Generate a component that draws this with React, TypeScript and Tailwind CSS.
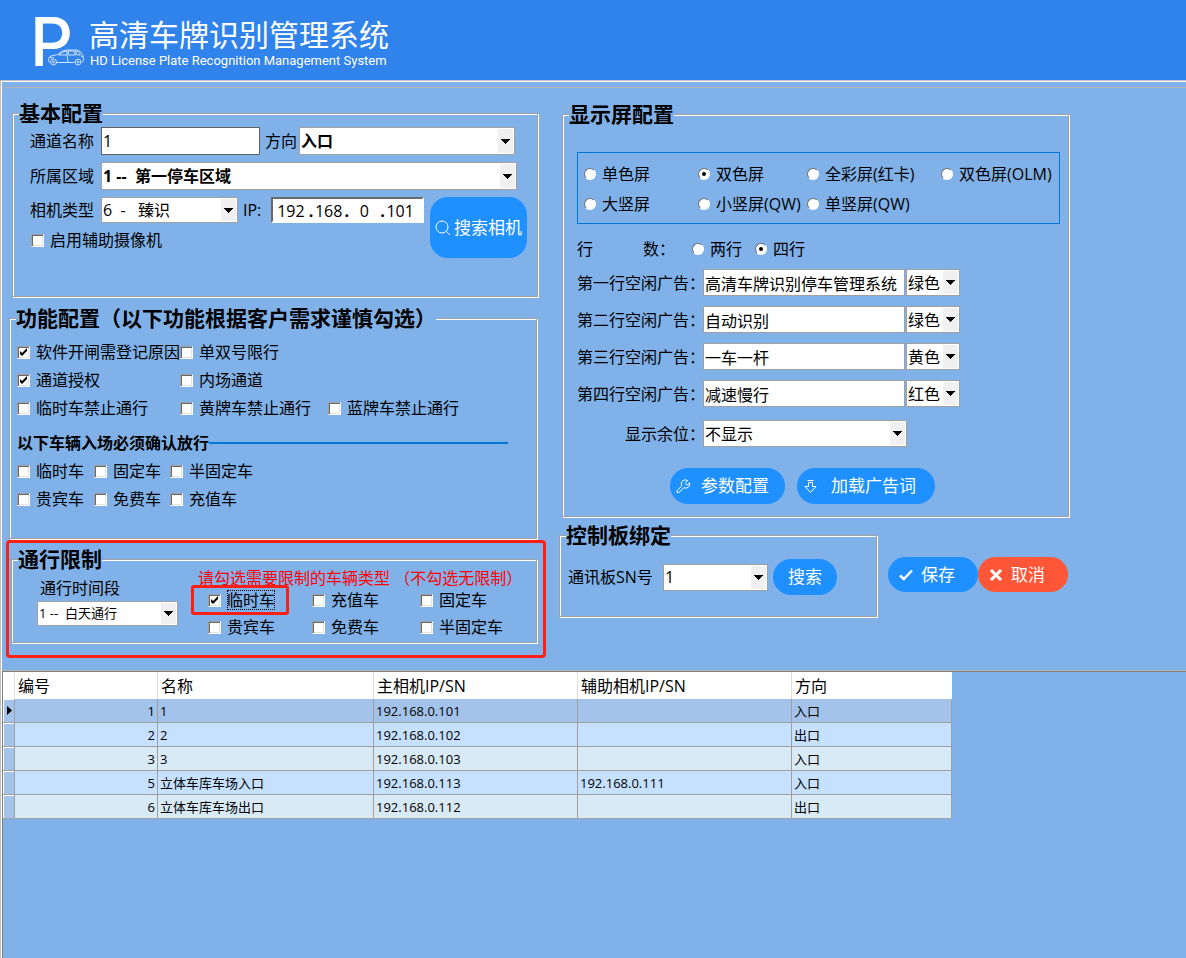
import type { ReactNode } from 'react';
import clsx from 'clsx';

const vehicleChecks = ['临时车', '固定车', '半固定车', '贵宾车', '免费车', '充值车'];

const featureChecks = [
  { label: '软件开闸需登记原因', checked: true },
  { label: '单双号限行' },
  { label: '' },
  { label: '通道授权', checked: true },
  { label: '内场通道' },
  { label: '' },
  { label: '临时车禁止通行' },
  { label: '黄牌车禁止通行' },
  { label: '蓝牌车禁止通行' },
];

const screenTypes = ['单色屏', '双色屏', '全彩屏(红卡)', '双色屏(OLM)', '大竖屏', '小竖屏(QW)', '单竖屏(QW)'];

const adLines = [
  { id: 'ad1', label: '第一行空闲广告：', text: '高清车牌识别停车管理系统', color: '绿色' },
  { id: 'ad2', label: '第二行空闲广告：', text: '自动识别', color: '绿色' },
  { id: 'ad3', label: '第三行空闲广告：', text: '一车一杆', color: '黄色' },
  { id: 'ad4', label: '第四行空闲广告：', text: '减速慢行', color: '红色' },
];

const channels = [
  { no: 1, name: '1', ip: '192.168.0.101', aux: '', dir: '入口' },
  { no: 2, name: '2', ip: '192.168.0.102', aux: '', dir: '出口' },
  { no: 3, name: '3', ip: '192.168.0.103', aux: '', dir: '入口' },
  { no: 5, name: '立体车库车场入口', ip: '192.168.0.113', aux: '192.168.0.111', dir: '入口' },
  { no: 6, name: '立体车库车场出口', ip: '192.168.0.112', aux: '', dir: '出口' },
];

type GroupProps = { title: string; className?: string; bodyClass?: string; children: ReactNode };

function Group({ title, className, bodyClass, children }: GroupProps) {
  return (
    <fieldset className={clsx('border border-[#a0a0a0] shadow-[1px_1px_0_#fff,inset_1px_1px_0_#fff]', className)}>
      <legend className="ml-[6px] bg-[#80b1e8] text-[21px] leading-6 font-bold whitespace-nowrap">{title}</legend>
      <div className={bodyClass}>{children}</div>
    </fieldset>
  );
}

function Check({ label, checked, focused }: { label: string; checked?: boolean; focused?: boolean }) {
  return (
    <label className="flex items-center gap-[6px] whitespace-nowrap">
      <span className="grid shrink-0">
        <input
          type="checkbox"
          defaultChecked={checked}
          className="peer col-start-1 row-start-1 size-[13px] appearance-none border border-t-[#a0a0a0] border-r-white border-b-white border-l-[#a0a0a0] bg-white shadow-[inset_1px_1px_0_#696969,inset_-1px_-1px_0_#e3e3e3]"
        />
        <svg viewBox="0 0 13 13" className="pointer-events-none col-start-1 row-start-1 hidden size-[13px] peer-checked:block">
          <path d="M3 5v3l2 2 5-5V2L5 7z" fill="#000" />
        </svg>
      </span>
      <span className={clsx('leading-5', focused && 'outline-1 -outline-offset-1 outline-dotted outline-black')}>{label}</span>
    </label>
  );
}

function Radio({ name, label, checked }: { name: string; label: string; checked?: boolean }) {
  return (
    <label className="flex items-center gap-[6px] whitespace-nowrap">
      <input
        type="radio"
        name={name}
        defaultChecked={checked}
        className="grid size-3 shrink-0 appearance-none place-items-center rounded-full border border-t-[#707070] border-r-white border-b-white border-l-[#707070] bg-white before:hidden before:size-1 before:rounded-full before:bg-black before:content-[''] checked:before:block"
      />
      {label}
    </label>
  );
}

function Select({ id, label, value, className }: { id?: string; label?: string; value: string; className?: string }) {
  return (
    <span className={clsx('relative flex shrink-0 border border-[#a0a0a0] bg-white', className)}>
      <select id={id} aria-label={label} className="h-full w-full appearance-none pl-px outline-none">
        <option>{value}</option>
      </select>
      <span className="pointer-events-none absolute inset-y-px right-px flex w-[15px] items-center justify-center bg-[#f0f0f0]">
        <svg viewBox="0 0 9 5" className="h-[5px] w-[9px]" shapeRendering="crispEdges">
          <path d="M0 0h9L4.5 5z" />
        </svg>
      </span>
    </span>
  );
}

function Logo() {
  return (
    <div className="relative mt-[3px] ml-[30px] h-[50px] w-[59px] text-white">
      <span className="block font-['Inter'] text-[67px] leading-[50px] font-medium">P</span>
      <svg viewBox="0 0 38 17" className="absolute right-[4px] bottom-px h-[17px] w-[38px]" fill="none" stroke="#cfe2fb" strokeWidth="1">
        <path d="M2.500 13.500 1.500 11.500 2 8.500 4 7 10.500 5.500 15.500 2 20 1h10l3.500 1.500 2.500 4 .5 5-1.500 2M9.500 13.500h17.500" />
        <path d="M11.500 6 16 3l4-1v4zM21.500 2h5l2 4h-7zM28 2l3 .5 2.500 3.500H30zM3 8.500l4 .5M20 6l1 7M34 7l2 1" />
        <circle cx="6.500" cy="13" r="3" />
        <circle cx="6.500" cy="13" r="1" />
        <circle cx="31" cy="13" r="3" />
        <circle cx="31" cy="13" r="1" />
      </svg>
    </div>
  );
}

function BasicConfig() {
  return (
    <Group title="基本配置" className="mr-[21px] ml-[10px]" bodyClass="pt-[2px] pr-[10px] pb-[38px] pl-[17px]">
      <div className="flex items-center">
        <label htmlFor="channel" className="w-[71px] shrink-0">通道名称</label>
        <input id="channel" defaultValue="1" className="h-7 w-[159px] min-w-0 border border-[#606060] bg-white pl-px outline-none" />
        <label htmlFor="direction" className="w-[39px] shrink-0 pl-[5px] whitespace-nowrap">方向</label>
        <Select id="direction" value="入口" className="h-7 w-[216px] font-bold" />
      </div>
      <div className="mt-[7px] flex items-center">
        <label htmlFor="area" className="w-[71px] shrink-0">所属区域</label>
        <Select id="area" value={'1 -- \u00a0第一停车区域'} className="h-7 w-[416px] font-bold" />
      </div>
      <div className="mt-[7px] flex items-start">
        <div>
          <div className="flex items-center">
            <label htmlFor="camera" className="w-[71px] shrink-0">相机类型</label>
            <Select id="camera" value={'6 \u00a0-\u00a0\u00a0 臻识'} className="h-[26px] w-[137px]" />
            <span className="w-[33px] pl-[5px]">IP:</span>
            <div className="flex h-[26px] w-[153px] items-end border-2 border-t-[#696969] border-r-white border-b-white border-l-[#696969] bg-white pr-[6px]">
              {['192', '168', '0', '101'].map((part, i) => (
                <span key={part} className="flex flex-1 items-end leading-5">
                  {i > 0 && <span className="w-1 font-bold">.</span>}
                  <input aria-label={`IP ${i + 1}`} defaultValue={part} className="h-5 w-full min-w-0 text-center outline-none" />
                </span>
              ))}
            </div>
          </div>
          <div className="mt-[7px] flex pl-px">
            <Check label="启用辅助摄像机" />
          </div>
        </div>
        <button type="button" className="ml-[6px] flex h-[61px] w-[97px] items-center justify-center gap-[3px] rounded-[18px] bg-[#1e90ff] text-[17px] whitespace-nowrap text-white">
          <svg viewBox="0 0 16 16" className="size-4 shrink-0" fill="none" stroke="currentColor">
            <circle cx="7" cy="7" r="6" />
            <path d="m11.500 11.500 3.500 3.500" />
          </svg>
          搜索相机
        </button>
      </div>
    </Group>
  );
}

function FeatureConfig() {
  return (
    <Group title="功能配置（以下功能根据客户需求谨慎勾选）" className="mt-[9px] mr-[22px] ml-[7px]" bodyClass="pt-2 pb-[25px] pl-[7px]">
      <div className="grid auto-rows-[28px] grid-cols-[163px_148px_1fr]">
        {featureChecks.map((item, i) => (item.label ? <Check key={i} {...item} /> : <span key={i} />))}
      </div>
      <div className="mt-[7px] flex h-7 items-center pr-7">
        <h3 className="font-bold whitespace-nowrap">以下车辆入场必须确认放行</h3>
        <span className="h-[2px] flex-1 bg-[#0078d7]" />
      </div>
      <div className="grid auto-rows-[28px] grid-cols-[77px_76px_1fr]">
        {vehicleChecks.map((label) => (
          <Check key={label} label={label} />
        ))}
      </div>
    </Group>
  );
}

function PassLimit() {
  return (
    <div className="mt-px mr-[13px] ml-1 rounded border-[3px] border-[#ff2015] pt-1 pr-[6px] pb-3 pl-[2px]">
      <Group title="通行限制" bodyClass="flex pt-px pb-[3px] pl-[25px]">
        <div className="flex flex-col gap-px pt-1">
          <label htmlFor="period" className="pl-[3px] leading-6">通行时间段</label>
          <Select id="period" value={'1 -- \u00a0白天通行'} className="h-[25px] w-[141px] text-[13px]" />
        </div>
        <div className="ml-[13px] flex-1">
          <p className="pb-px pl-[7px] leading-3 whitespace-nowrap text-[#ff0000]">请勾选需要限制的车辆类型 （不勾选无限制）</p>
          <div className="grid grid-cols-[121px_108px_1fr] items-center">
            <div className="mr-[23px] flex h-[30px] rounded-[3px] border-[3px] border-[#ff2015] pl-[14px]">
              <Check label="临时车" checked focused />
            </div>
            <Check label="充值车" />
            <Check label="固定车" />
          </div>
          <div className="grid h-6 grid-cols-[121px_108px_1fr] items-center">
            <div className="pl-[17px]">
              <Check label="贵宾车" />
            </div>
            <Check label="免费车" />
            <Check label="半固定车" />
          </div>
        </div>
      </Group>
    </div>
  );
}

function ScreenConfig() {
  return (
    <Group title="显示屏配置" className="mr-[117px] ml-[3px]" bodyClass="pt-[26px] pr-2 pb-3 pl-[14px]">
      <div className="grid auto-rows-[30px] grid-cols-[114px_109px_134px_1fr] border border-[#0078d7] pt-[6px] pb-1 pl-[6px]">
        {screenTypes.map((type) => (
          <Radio key={type} name="screen" label={type} checked={type === '双色屏'} />
        ))}
      </div>
      <div className="mt-[13px] flex h-6 items-center">
        <span className="w-[66px]">行</span>
        <span className="w-[49px]">数：</span>
        <div className="flex gap-[13px]">
          <Radio name="rows" label="两行" />
          <Radio name="rows" label="四行" checked />
        </div>
      </div>
      <div className="mt-2 flex flex-col gap-[10px]">
        {adLines.map((ad) => (
          <div key={ad.id} className="flex items-center">
            <label htmlFor={ad.id} className="w-[126px] shrink-0 whitespace-nowrap">{ad.label}</label>
            <input id={ad.id} defaultValue={ad.text} className="h-[27px] w-[202px] border border-[#a0a0a0] bg-white pl-px outline-none" />
            <Select label={`${ad.label}颜色`} value={ad.color} className="ml-px h-[27px] w-[54px]" />
          </div>
        ))}
      </div>
      <div className="mt-[13px] flex items-center">
        <label htmlFor="remain" className="w-[126px] shrink-0 pl-12 whitespace-nowrap">显示余位：</label>
        <Select id="remain" value="不显示" className="h-[27px] w-[204px]" />
      </div>
      <div className="mt-[21px] ml-[93px] flex gap-3 text-[17px] text-white">
        <button type="button" className="flex h-9 w-[115px] items-center gap-[10px] rounded-full bg-[#1e90ff] pl-[6px] whitespace-nowrap">
          <svg viewBox="0 0 15 15" className="size-[15px] shrink-0" fill="none" stroke="currentColor">
            <path d="M11.500 1.500A4 4 0 0 0 5.800 6.800L1 11.800v1.700h2l5-4.800a4 4 0 0 0 5.500-5L11.500 6l-2-.5" />
            <path d="M11.500 1.500 9 4.500" />
          </svg>
          参数配置
        </button>
        <button type="button" className="flex h-9 w-[138px] items-center gap-[13px] rounded-full bg-[#1e90ff] pl-[6px] whitespace-nowrap">
          <svg viewBox="0 0 15 15" className="size-[15px] shrink-0" fill="none" stroke="currentColor">
            <path d="M4.500 1.500h6M5.500 7.500v-4h4v4H13L7.500 13.500 2 7.500z" />
          </svg>
          加载广告词
        </button>
      </div>
    </Group>
  );
}

function BoardBinding() {
  return (
    <div className="mt-[6px] flex items-start">
      <Group title="控制板绑定" className="w-[318px] shrink-0" bodyClass="flex items-center pt-3 pb-[21px] pl-2">
        <label htmlFor="board" className="w-[95px] whitespace-nowrap">通讯板SN号</label>
        <Select id="board" value="1" className="h-[27px] w-[105px]" />
        <button type="button" className="ml-[5px] h-9 w-16 rounded-full bg-[#1e90ff] text-[17px] text-white">搜索</button>
      </Group>
      <div className="mt-[34px] ml-[11px] flex text-[17px] text-white">
        <button type="button" className="flex h-[35px] w-[90px] items-center gap-2 rounded-full bg-[#1e90ff] pl-[11px] whitespace-nowrap">
          <svg viewBox="0 0 14 14" className="size-[14px] shrink-0" fill="none" stroke="currentColor" strokeWidth="2.400">
            <path d="M1 7.500 4.800 11 13 2.500" />
          </svg>
          保存
        </button>
        <button type="button" className="flex h-[35px] w-[90px] items-center gap-2 rounded-full bg-[#ff5638] pl-[11px] whitespace-nowrap">
          <svg viewBox="0 0 14 14" className="size-[14px] shrink-0" fill="none" stroke="currentColor" strokeWidth="3">
            <path d="m2 2 10 10M12 2 2 12" />
          </svg>
          取消
        </button>
      </div>
    </div>
  );
}

function ChannelTable() {
  const cell = 'border-r border-b border-[#a0a0a0] px-[2px]';
  return (
    <table className="w-[949px] table-fixed border-separate border-spacing-0 text-[13px]">
      <colgroup>
        <col className="w-3" />
        <col className="w-[143px]" />
        <col className="w-[216px]" />
        <col className="w-[204px]" />
        <col className="w-[214px]" />
        <col />
      </colgroup>
      <thead>
        <tr className="h-[27px] bg-white text-left text-base">
          <th className="border-r border-[#e0e0e0]" />
          {['编号', '名称', '主相机IP/SN', '辅助相机IP/SN', '方向'].map((head) => (
            <th key={head} className="border-r border-[#e0e0e0] pl-[3px] leading-6 font-normal last:border-white">{head}</th>
          ))}
        </tr>
      </thead>
      <tbody>
        {channels.map((row, i) => (
          <tr
            key={row.no}
            className={clsx('h-6 leading-5', i === 0 ? 'bg-[#a4c3eb]' : i % 2 ? 'bg-[#c6e0ff]' : 'bg-[#d8eaf6]')}
          >
            <td className="border-r border-b border-[#a0a0a0] bg-[#a4c3eb] shadow-[inset_1px_1px_0_#fff]">
              {i === 0 && (
                <svg viewBox="0 0 5 9" className="ml-1 h-[9px] w-[5px]">
                  <path d="M0 0v9l5-4.500z" />
                </svg>
              )}
            </td>
            <td className={clsx(cell, 'text-right')}>{row.no}</td>
            <td className={cell}>{row.name}</td>
            <td className={cell}>{row.ip}</td>
            <td className={cell}>{row.aux}</td>
            <td className={cell}>{row.dir}</td>
          </tr>
        ))}
      </tbody>
    </table>
  );
}

export default function App() {
  return (
    <div className="flex min-h-screen flex-col bg-[#80b1e8] font-['Open_Sans','Noto_Sans_CJK_SC',sans-serif] text-base text-black">
      <header className="flex h-20 items-center bg-[#3083eb] text-white">
        <Logo />
        <div className="pt-[5px]">
          <h1 className="text-[30px] leading-9 whitespace-nowrap">高清车牌识别管理系统</h1>
          <p className="pl-px font-['Roboto'] text-[13px] leading-4">HD License Plate Recognition Management System</p>
        </div>
      </header>
      <main className="flex flex-1 flex-col border-t border-l border-[#c0c0c0]">
        <div className="flex flex-1 flex-col border-t border-l border-white pt-[5px]">
          <div className="grid grid-cols-[557fr_627fr] rounded-tl-sm border-t border-[#b4b4b4] pt-[13px] pb-3">
            <div>
              <BasicConfig />
              <FeatureConfig />
              <PassLimit />
            </div>
            <div className="pt-px">
              <ScreenConfig />
              <BoardBinding />
            </div>
          </div>
          <div className="flex flex-1 flex-col border-t border-[#b4b4b4]">
            <div className="flex-1 border-t border-l border-[#808080]">
              <ChannelTable />
            </div>
          </div>
        </div>
      </main>
    </div>
  );
}
